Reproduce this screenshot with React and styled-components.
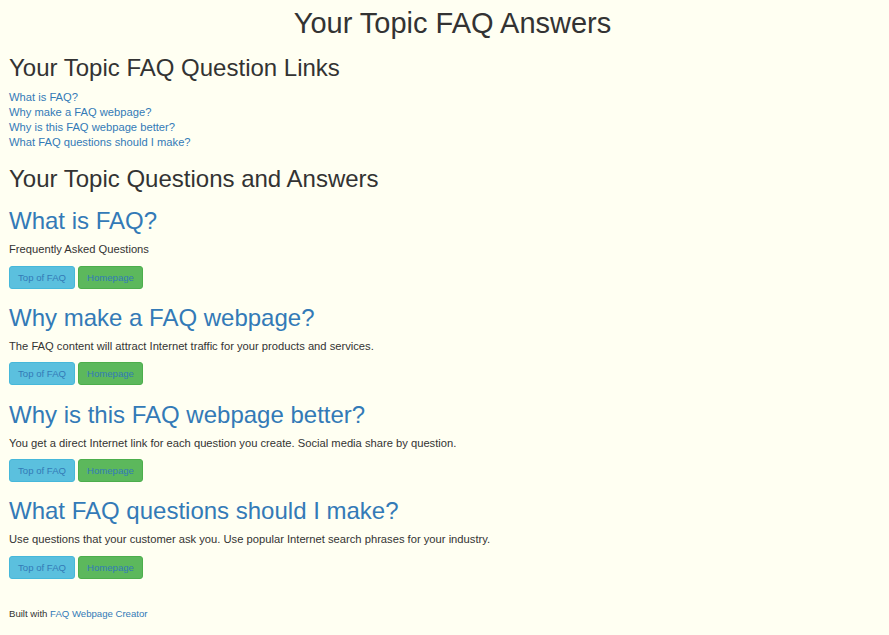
import React from "react";
import styled, { createGlobalStyle } from "styled-components";

const faqs = [
    { id: "q1", question: "What is FAQ?", answer: "Frequently Asked Questions" },
    { id: "q2", question: "Why make a FAQ webpage?", answer: "The FAQ content will attract Internet traffic for your products and services." },
    { id: "q3", question: "Why is this FAQ webpage better?", answer: "You get a direct Internet link for each question you create. Social media share by question." },
    { id: "q4", question: "What FAQ questions should I make?", answer: "Use questions that your customer ask you. Use popular Internet search phrases for your industry." },
];

export default function App() {
    return (
        <Page>
            <GlobalStyle />
            <Title id="top">Your Topic FAQ Answers</Title>

            <SectionTitle>Your Topic FAQ Question Links</SectionTitle>
            <LinkList>
                {faqs.map(f => (
                    <li key={f.id}><TextLink href={`#${f.id}`}>{f.question}</TextLink></li>
                ))}
            </LinkList>

            <SectionTitle $top={16}>Your Topic Questions and Answers</SectionTitle>
            {faqs.map(f => (
                <Question key={f.id} id={f.id}>
                    <QuestionTitle>{f.question}</QuestionTitle>
                    <Answer>{f.answer}</Answer>
                    <Buttons>
                        <Btn href="#top" $bg="#5bc0de" $border="#46b8da">Top of FAQ</Btn>
                        <Btn href="#" $bg="#5cb85c" $border="#4cae4c">Homepage</Btn>
                    </Buttons>
                </Question>
            ))}

            <Footer>
                Built with <TextLink href="#">FAQ Webpage Creator</TextLink>
            </Footer>
        </Page>
    );
}

const GlobalStyle = createGlobalStyle`
    html, body {
        margin: 0;
        padding: 0;
        background: #fffff2;
    }
    body {
        font-family: "Liberation Sans", Arial, sans-serif;
        color: #333333;
    }
`;

const Page = styled.div`
    box-sizing: border-box;
    width: 100%;
    min-height: 635px;
    padding: 8px 9px 0 9px;
    background: #fffff2;
`;

const Title = styled.h1`
    margin: 0;
    padding-left: 16px;
    text-align: center;
    font-size: 29px;
    font-weight: 400;
    line-height: 31px;
    color: #333333;
`;

const SectionTitle = styled.h2`
    margin: ${p => p.$top || 15.5}px 0 0 0;
    font-size: 24px;
    font-weight: 400;
    line-height: 26.4px;
    color: #333333;
`;

const LinkList = styled.ul`
    list-style: none;
    margin: 8.7px 0 0 0;
    padding: 0;
    li {
        font-size: 11.2px;
        line-height: 15px;
    }
`;

const TextLink = styled.a`
    color: #337ab7;
    text-decoration: none;
    font-size: 11.2px;
`;

const Question = styled.section`
    margin-top: 16.2px;
`;

const QuestionTitle = styled.h3`
    margin: 0;
    font-size: 24px;
    font-weight: 400;
    line-height: 26.4px;
    color: #337ab7;
`;

const Answer = styled.p`
    margin: 7.8px 0 0 0;
    font-size: 11.2px;
    line-height: 15px;
    color: #333333;
`;

const Buttons = styled.div`
    display: flex;
    gap: 3px;
    margin-top: 8.3px;
`;

const Btn = styled.a`
    box-sizing: border-box;
    display: inline-flex;
    align-items: center;
    justify-content: center;
    height: 23px;
    padding: 0 8px;
    font-size: 9.6px;
    color: #337ab7;
    text-decoration: none;
    background: ${p => p.$bg};
    border: 1px solid ${p => p.$border};
    border-radius: 3px;
`;

const Footer = styled.footer`
    margin-top: 27.5px;
    font-size: 9.6px;
    line-height: 15px;
    color: #333333;
    ${TextLink} {
        font-size: 9.6px;
    }
`;
